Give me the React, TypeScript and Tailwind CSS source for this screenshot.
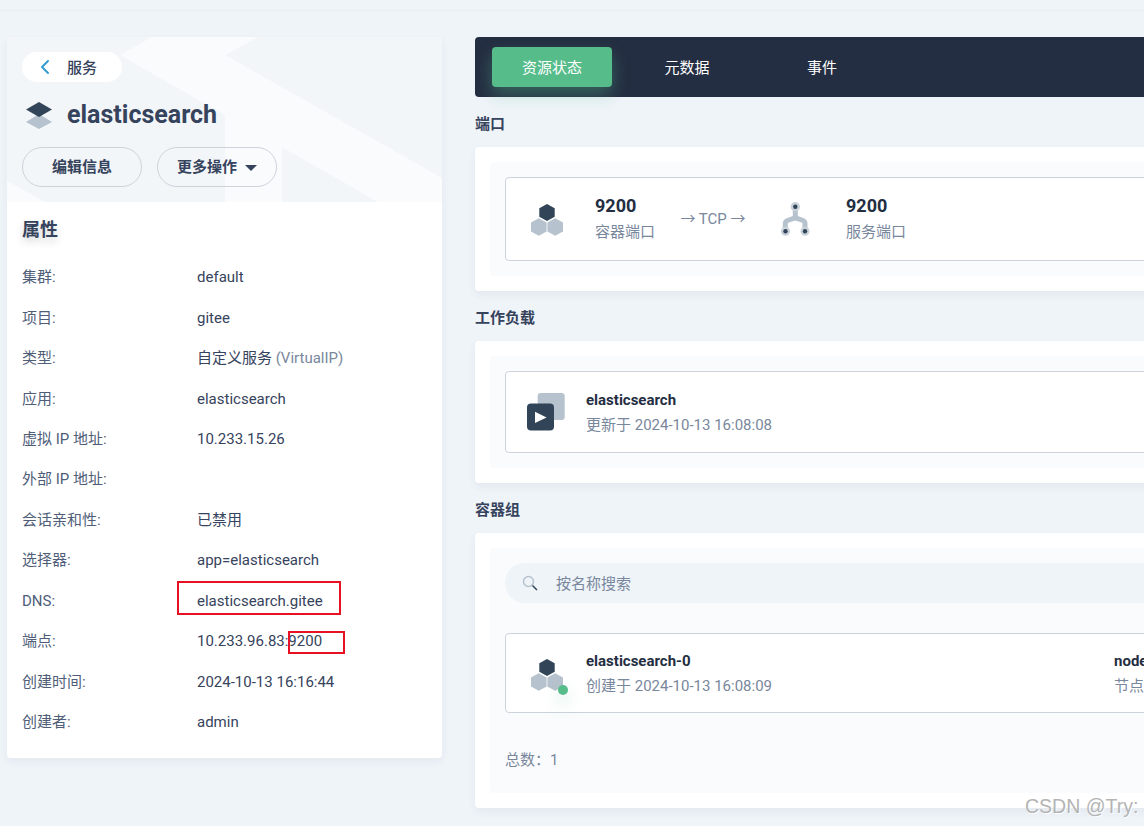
import { ChevronLeft } from "lucide-react";

const font = { fontFamily: '"Roboto", "Noto Sans CJK SC", sans-serif' };

const props: [string, React.ReactNode][] = [
  ["集群:", "default"],
  ["项目:", "gitee"],
  ["类型:", <>自定义服务 <span className="text-[#79879c]">(VirtualIP)</span></>],
  ["应用:", "elasticsearch"],
  ["虚拟 IP 地址:", "10.233.15.26"],
  ["外部 IP 地址:", ""],
  ["会话亲和性:", "已禁用"],
  ["选择器:", "app=elasticsearch"],
  ["DNS:", "elasticsearch.gitee"],
  ["端点:", "10.233.96.83:9200"],
  ["创建时间:", "2024-10-13 16:16:44"],
  ["创建者:", "admin"],
];

function Hexes({ className }: { className?: string }) {
  return (
    <svg viewBox="0 0 32 32" className={className}>
      <path d="M16 0l7.700 4.200v8.600L16 17l-7.700-4.200V4.200z" fill="#324558" />
      <path d="M7.800 14.300l7.800 4.300v8.800l-7.800 4.300L0 27.400v-8.800z" fill="#b6c2cd" />
      <path d="M24.200 14.300l7.800 4.300v8.800l-7.800 4.300-7.800-4.300v-8.800z" fill="#b6c2cd" />
    </svg>
  );
}

function BranchIcon() {
  return (
    <svg viewBox="0 0 29 34" className="h-[34px] w-[29px]">
      <path d="M14.300 5v9.500Q14.300 16 12.500 16.500L6.500 18.500Q4.300 19.500 4.300 21.500V29.700M14.300 14.500Q14.300 16 16 16.500L22 18.500Q24 19.500 24 21.500V29.700" stroke="#b6c2cd" strokeWidth="5" fill="none" />
      <circle cx="14.300" cy="4.700" r="4.700" fill="#c9d2da" />
      <circle cx="4.500" cy="29.300" r="4.500" fill="#c9d2da" />
      <circle cx="24" cy="29.300" r="4.500" fill="#c9d2da" />
      <circle cx="14.300" cy="4.700" r="2.200" fill="#324558" />
      <circle cx="4.500" cy="29.300" r="2.200" fill="#324558" />
      <circle cx="24" cy="29.300" r="2.200" fill="#324558" />
    </svg>
  );
}

function PlayIcon() {
  return (
    <svg viewBox="0 0 38 38" className="h-[38px] w-[38px]">
      <rect x="10.700" y="0" width="27" height="27" rx="3" fill="#b6c2cd" />
      <rect x="0" y="10.500" width="27" height="27" rx="4" fill="#324558" />
      <path d="M8 18.700l11.600 5.700L8 30z" fill="#fff" />
    </svg>
  );
}

function Label({ children }: { children: React.ReactNode }) {
  return <div className="flex h-[50px] items-center pt-[4px] font-bold leading-5 text-[#36435c]">{children}</div>;
}

function Panel({ children, className }: { children: React.ReactNode; className?: string }) {
  return (
    <div className={`rounded bg-white p-[15px] shadow-[0_4px_8px_0_rgba(36,46,66,0.06)] ${className ?? ""}`}>
      <div className="h-full rounded bg-[#f9fbfd] p-[15px]">{children}</div>
    </div>
  );
}

export default function App() {
  return (
    <div style={font} className="relative h-[826px] w-[1144px] overflow-hidden bg-[#eff4f9] text-[15px] text-[#36435c]">
      <div className="h-[11px] border-b border-[#e9eef3]" />
      <div className="flex items-start pl-[7px] pt-[26px]">
        {/* left card */}
        <aside className="w-[435px] shrink-0 overflow-hidden rounded bg-white shadow-[0_4px_8px_0_rgba(36,46,66,0.06)]">
          <div className="relative h-[165px] bg-[#f3f6f9] px-[15px] pt-[15px]">
            <svg viewBox="0 0 435 165" className="absolute inset-0 h-[165px] w-[435px]">
              <path d="M113 18L145 0H251L218 18L435 141V165H371L275 110V165H218V78Z" fill="#fafbfd" />
              <path d="M0 144L38 165H0Z" fill="#fafbfd" />
            </svg>
            <div className="relative">
              <div className="flex h-[30px] w-[100px] items-center rounded-full bg-white pl-[11px] font-medium">
                <ChevronLeft size={24} strokeWidth={2} className="text-[#329dce]" />
                <span className="ml-[10px] pt-[2px] text-[#36435c]">服务</span>
              </div>
              <div className="mt-[16px] flex h-[34px] items-center">
                <svg viewBox="0 0 26 27" className="ml-[4px] h-[27px] w-[26px]">
                  <path d="M13 12L0 20l13 7 13-7z" fill="#b6c2cd" />
                  <path d="M13 0L0 7.500l13 7.500 13-7.500z" fill="#324558" />
                </svg>
                <span className="ml-[15px] text-[25px] font-bold leading-8 text-[#36435c]">elasticsearch</span>
              </div>
              <div className="mt-[15px] flex gap-[15px]">
                <button className="h-10 w-[120px] rounded-full border border-[#ccd3db] pt-[1px] font-bold text-[#36435c]">编辑信息</button>
                <button className="flex h-10 w-[120px] items-center justify-center gap-2 rounded-full border border-[#ccd3db] pt-[1px] font-bold text-[#36435c]">
                  更多操作
                  <svg viewBox="0 0 12 6" className="h-[6px] w-[12px]"><path d="M0 0h12L6 6z" fill="#36435c" /></svg>
                </button>
              </div>
            </div>
          </div>
          <div className="px-[15px] pb-[15.600px] pt-[15px]">
            <h3 className="text-lg font-bold leading-[26px] text-[#36435c] [text-shadow:0_4px_8px_rgba(36,46,66,0.2)]">属性</h3>
            <dl className="mt-[14.300px]">
              {props.map(([k, v]) => (
                <div key={k} className="flex h-[40.45px] items-center">
                  <dt className="w-[175px] shrink-0 text-[#4f5e78]">{k}</dt>
                  <dd className="text-[#36435c]">{v}</dd>
                </div>
              ))}
            </dl>
          </div>
        </aside>

        {/* right column */}
        <main className="ml-[33px] w-[900px] shrink-0">
          <div className="flex h-[60px] gap-[15px] rounded bg-[#242e42] px-[17px] py-[10px]">
            <div className="flex w-[120px] items-center justify-center rounded bg-[#55bc8a] pt-[2px] text-white shadow-[0_8px_16px_0_rgba(85,188,138,0.36)]">资源状态</div>
            <div className="flex w-[120px] items-center justify-center pt-[2px] text-white">元数据</div>
            <div className="flex w-[120px] items-center justify-center pt-[2px] text-white">事件</div>
          </div>

          <Label>端口</Label>
          <Panel className="h-[144px]">
            <div className="flex h-[84px] items-center rounded border border-[#ccd3db] bg-white pl-[25px]">
              <Hexes className="mt-[2px] h-8 w-8" />
              <div className="ml-[32px] w-[85px]">
                <div className="text-lg font-bold leading-[24px] text-[#242e42]">9200</div>
                <div className="pt-[1px] leading-[26px] text-[#79879c]">容器端口</div>
              </div>
              <div className="w-[66px] text-center text-[#79879c]">→ TCP →</div>
              <div className="ml-[35px]"><BranchIcon /></div>
              <div className="ml-[36px]">
                <div className="text-lg font-bold leading-[24px] text-[#242e42]">9200</div>
                <div className="pt-[1px] leading-[26px] text-[#79879c]">服务端口</div>
              </div>
            </div>
          </Panel>

          <Label>工作负载</Label>
          <Panel className="h-[142px]">
            <div className="flex h-[82px] items-center rounded border border-[#ccd3db] bg-white pl-[21px]">
              <PlayIcon />
              <div className="ml-[21px]">
                <div className="font-bold leading-5 text-[#242e42]">elasticsearch</div>
                <div className="mt-[5px] leading-5 text-[#79879c]">更新于 2024-10-13 16:08:08</div>
              </div>
            </div>
          </Panel>

          <Label>容器组</Label>
          <Panel className="h-[275px]">
            <div className="flex h-10 items-center rounded-full bg-[#eff4f9] pl-[17px] text-[#79879c]">
              <svg viewBox="0 0 16 16" className="h-4 w-4">
                <circle cx="6.500" cy="6.500" r="5" fill="none" stroke="#b6c2cd" strokeWidth="1.500" />
                <path d="M10.500 10.500l4.500 4.500" stroke="#324558" strokeWidth="1.500" />
              </svg>
              <span className="ml-[18px] pt-[2px]">按名称搜索</span>
            </div>
            <div className="mt-[30px] flex h-20 items-center rounded border border-[#ccd3db] bg-white pl-[25px]">
              <div className="relative mt-[4px] h-[32px] w-[32px]">
                <Hexes className="h-8 w-8" />
                <span className="absolute bottom-[-4px] right-[-5px] h-[10px] w-[10px] rounded-full bg-[#55bc8a] shadow-[0_8px_16px_0_rgba(85,188,138,0.36)]" />
              </div>
              <div className="ml-[23px] w-[528px]">
                <div className="font-bold leading-5 text-[#242e42]">elasticsearch-0</div>
                <div className="mt-[5px] leading-5 text-[#79879c]">创建于 2024-10-13 16:08:09</div>
              </div>
              <div>
                <div className="font-bold leading-5 text-[#242e42]">node1</div>
                <div className="mt-[5px] leading-5 text-[#79879c]">节点</div>
              </div>
            </div>
            <div className="mt-[37px] leading-5 text-[#79879c]">总数：1</div>
          </Panel>
        </main>
      </div>

      {/* annotations over the screenshot */}
      <div className="absolute left-[177px] top-[581px] h-[34px] w-[164px] border-2 border-[#e81123]" />
      <div className="absolute left-[288px] top-[631px] h-[23px] w-[57px] border-2 border-[#e81123]" />
      <div
        style={{ fontFamily: '"Liberation Sans", sans-serif' }}
        className="absolute left-[1025px] top-[795px] whitespace-nowrap text-[19.500px] leading-[22px] text-[#b4b4b4] [text-shadow:1px_1px_1px_#ffffff]"
      >
        CSDN @Try:
      </div>
    </div>
  );
}
